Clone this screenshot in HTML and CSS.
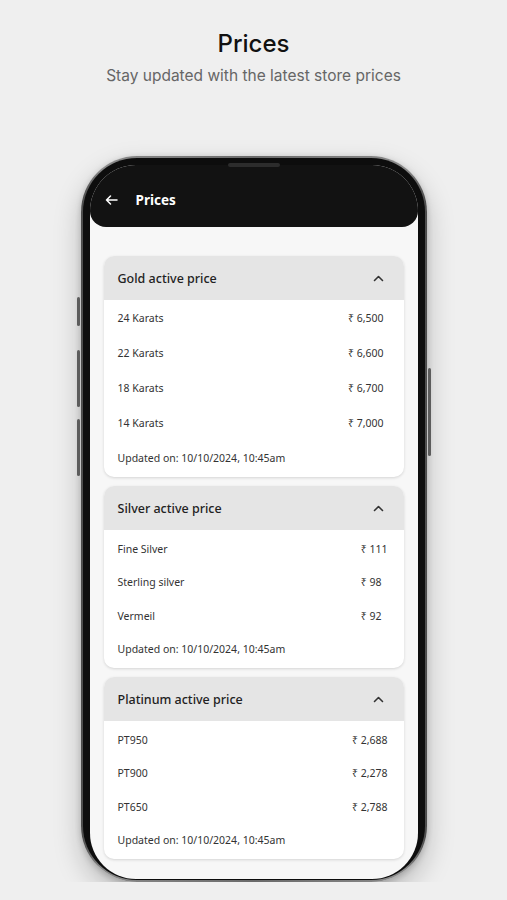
FILE: index.html
```html
<!DOCTYPE html>
<html lang="en">
<head>
  <meta charset="UTF-8" />
  <meta name="viewport" content="width=device-width, initial-scale=1" />
  <title>Prices</title>
  <link rel="stylesheet" href="styles.css">
</head>
<body>
  <header class="intro">
    <h1>Prices</h1>
    <p>Stay updated with the latest store prices</p>
  </header>

  <div class="phone">
    <span class="speaker"></span>
    <span class="btn btn-action"></span>
    <span class="btn btn-vol-up"></span>
    <span class="btn btn-vol-down"></span>
    <span class="btn btn-power"></span>

    <div class="screen">
      <div class="app-bar">
        <svg class="back" width="13" height="10" viewBox="0 0 13 10">
          <path d="M12 5H1.5M5.5 1L1.5 5L5.5 9" fill="none" stroke="#fff" stroke-width="1.5" stroke-linecap="round" stroke-linejoin="round"/>
        </svg>
        <span class="app-title">Prices</span>
      </div>

      <main class="content">
        <!-- Gold -->
        <section class="card">
          <div class="card-head">
            <span>Gold active price</span>
            <svg width="11" height="7" viewBox="0 0 11 7"><path d="M1.5 5.5L5.5 1.5L9.5 5.5" fill="none" stroke="#333" stroke-width="1.6" stroke-linecap="round" stroke-linejoin="round"/></svg>
          </div>
          <div class="card-body gold">
            <span>24 Karats</span><span class="price">₹ 6,500</span>
            <span>22 Karats</span><span class="price">₹ 6,600</span>
            <span>18 Karats</span><span class="price">₹ 6,700</span>
            <span>14 Karats</span><span class="price">₹ 7,000</span>
            <span class="updated">Updated on: 10/10/2024, 10:45am</span>
          </div>
        </section>

        <!-- Silver -->
        <section class="card">
          <div class="card-head">
            <span>Silver active price</span>
            <svg width="11" height="7" viewBox="0 0 11 7"><path d="M1.5 5.5L5.5 1.5L9.5 5.5" fill="none" stroke="#333" stroke-width="1.6" stroke-linecap="round" stroke-linejoin="round"/></svg>
          </div>
          <div class="card-body">
            <span>Fine Silver</span><span class="price">₹ 111</span>
            <span>Sterling silver</span><span class="price">₹ 98</span>
            <span>Vermeil</span><span class="price">₹ 92</span>
            <span class="updated">Updated on: 10/10/2024, 10:45am</span>
          </div>
        </section>

        <!-- Platinum -->
        <section class="card">
          <div class="card-head">
            <span>Platinum active price</span>
            <svg width="11" height="7" viewBox="0 0 11 7"><path d="M1.5 5.5L5.5 1.5L9.5 5.5" fill="none" stroke="#333" stroke-width="1.6" stroke-linecap="round" stroke-linejoin="round"/></svg>
          </div>
          <div class="card-body">
            <span>PT950</span><span class="price">₹ 2,688</span>
            <span>PT900</span><span class="price">₹ 2,278</span>
            <span>PT650</span><span class="price">₹ 2,788</span>
            <span class="updated">Updated on: 10/10/2024, 10:45am</span>
          </div>
        </section>
      </main>
    </div>
  </div>
</body>
</html>
```

FILE: styles.css
```css
body {
  margin: 0;
  padding: 0;
  background-color: #efefef;
  font-family: "Noto Sans", "Open Sans", sans-serif;
  overflow: hidden;
}

.intro {
  text-align: center;
  padding-top: 29px;
  font-family: Inter, "Noto Sans", sans-serif;
}

.intro h1 {
  margin: 0;
  font-size: 24px;
  line-height: 30px;
  font-weight: 500;
  color: #111;
}

.intro p {
  margin: 6px 0 0;
  font-size: 15.5px;
  line-height: 21px;
  color: #666;
}

/* phone frame */
.phone {
  position: relative;
  box-sizing: border-box;
  width: 346px;
  height: 726px;
  margin: 70px auto 0;
  padding: 4px;
  border-radius: 56px;
  background: linear-gradient(90deg, #4a4a4a, #8a8a8a 6%, #6a6a6a 50%, #8a8a8a 94%, #4a4a4a);
  box-shadow: 0 12px 28px rgba(0, 0, 0, 0.22), 0 2px 6px rgba(0, 0, 0, 0.2);
}

.phone::before {
  content: "";
  position: absolute;
  inset: 2px;
  border-radius: 54px;
  background: #0d0d0d;
}

.speaker {
  position: absolute;
  top: 7px;
  left: 147px;
  width: 52px;
  height: 4px;
  border-radius: 3px;
  background: #2c2c2c;
  z-index: 2;
}

.btn {
  position: absolute;
  width: 3px;
  border-radius: 2px;
  background: #5c5c5c;
}

.btn-action { left: -4px; top: 141px; height: 29px; }
.btn-vol-up { left: -4px; top: 194px; height: 57px; }
.btn-vol-down { left: -4px; top: 263px; height: 57px; }
.btn-power { right: -4px; top: 212px; height: 88px; }

.screen {
  position: relative;
  box-sizing: border-box;
  height: calc(100% - 4px);
  margin: 5px;
  border-radius: 46px;
  overflow: hidden;
  background: #f7f7f7;
}

.app-bar {
  height: 62px;
  display: flex;
  align-items: center;
  gap: 18px;
  padding: 8px 0 0 15px;
  box-sizing: border-box;
  background: #121212;
  border-radius: 0 0 16px 16px;
}

.back {
  display: block;
}

.app-title {
  color: white;
  font-size: 13.5px;
  font-weight: 700;
}

.content {
  padding: 29px 14px 0;
  display: flex;
  flex-direction: column;
  gap: 9px;
}

.card {
  background: white;
  border-radius: 10px;
  overflow: hidden;
  box-shadow: 0 1px 3px rgba(0, 0, 0, 0.14);
}

.card-head {
  height: 44px;
  display: flex;
  align-items: center;
  justify-content: space-between;
  padding: 0 20px 0 14px;
  background: #e5e5e5;
  color: #222;
  font-size: 12.5px;
  font-weight: 500;
}

.card-body {
  display: grid;
  grid-template-columns: 1fr auto;
  grid-auto-rows: 33.5px;
  align-items: center;
  padding: 2px 16px 2px 14px;
  font-size: 10.5px;
  color: #333;
}

.card-body.gold {
  grid-auto-rows: 35px;
  padding: 0 20px 2px 14px;
}

.updated {
  grid-column: 1 / -1;
}
```
